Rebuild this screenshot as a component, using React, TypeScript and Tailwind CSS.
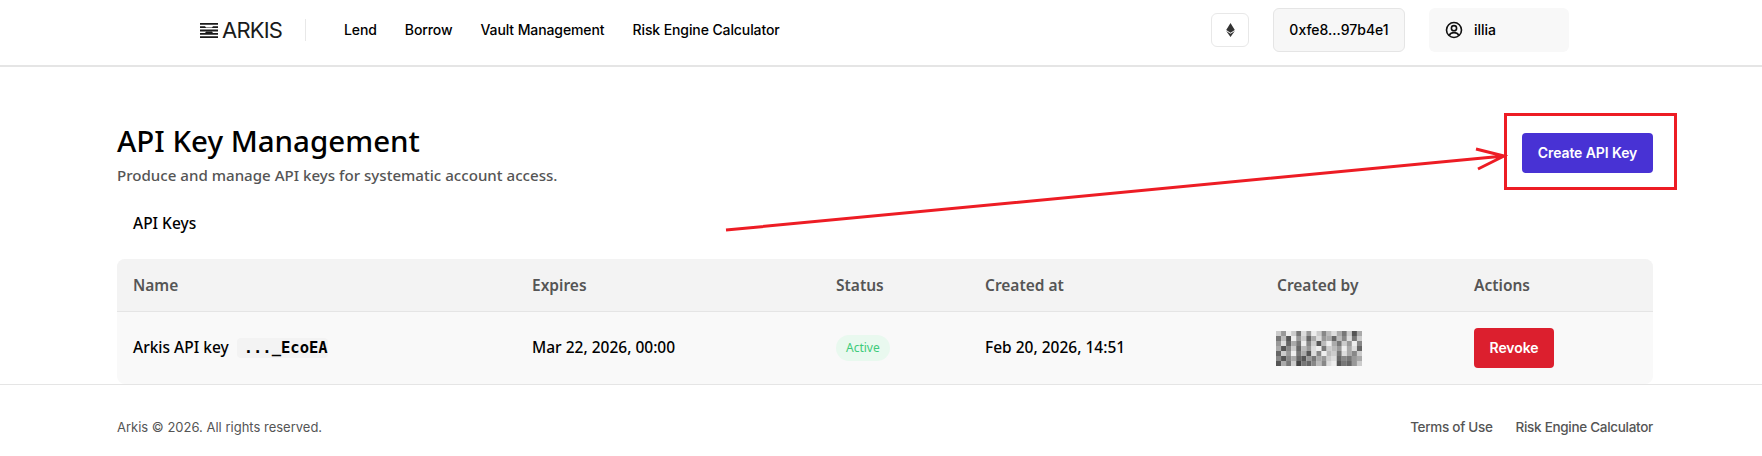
const nav = ['Lend', 'Borrow', 'Vault Management', 'Risk Engine Calculator'];

const tableCols = 'grid-cols-[399px_304px_149px_292px_197px_1fr]';

// gray levels of the pixelated "created by" cell, one hex digit per 5px block
const pixels = [
  'c9ec7d9ec8bda7c5a',
  '7b5e9c6ad9a6b8d7c',
  '9d6a7e8c5bea7c9e8',
  'a58c6b9de7cb9ead6',
  '6c9e7a5d8ebc7da8c',
  '858a6597a9cd6879a',
  '5a7c4768b8de5769c',
];

function Redacted() {
  return (
    <svg width="86" height="35" viewBox="0 0 85 35" preserveAspectRatio="none" className="block">
      {pixels.map((row, y) =>
        row.split('').map((c, x) => (
          <rect key={`${x}-${y}`} x={x * 5} y={y * 5} width="5" height="5" fill={`#${c}${c}${c}`}/>
        ))
      )}
    </svg>
  );
}

export default function App() {
  return (
    <div className="relative h-[456px] w-[1762px] overflow-hidden bg-white font-['Noto_Sans',sans-serif] text-black">
      <header className="flex h-[67px] items-center border-b-2 border-[#e5e5e5] pb-[5px] pl-[200px] pr-[193px]">
        <div className="flex w-[82px] items-center gap-1">
          <svg width="18" height="15" viewBox="0 0 18 15" fill="#1a1a1a" className="shrink-0">
            <path d="M0 0h18v1.800H0zM0 3.300h5l1 1.200h6l1-1.200h5v1.700H0zM0 6.600h18v1.800H0zM0 10h5l1-1.200h6l1 1.200h5v1.700H0zM0 13.200h18V15H0z"/>
          </svg>
          <span className="font-['Inter',sans-serif] text-[22px] font-normal leading-none tracking-[-0.8px] text-[#1a1a1a]">ARKIS</span>
        </div>
        <div className="ml-[23px] h-[22px] w-px bg-[#e8e8e8]"/>
        <nav className="ml-[38px] flex gap-7 font-['Inter',sans-serif] text-sm font-medium tracking-[-0.1px]">
          {nav.map((item) => (
            <a key={item}>{item}</a>
          ))}
        </nav>
        <div className="ml-auto flex items-center gap-6 font-['Inter',sans-serif] text-sm font-medium">
          <button className="flex h-[34px] w-[38px] items-center justify-center rounded-md border border-[#e8e8e8] bg-white">
            <svg width="9" height="14" viewBox="0 0 8 13" fill="#333">
              <path d="M4 0 8 6.500 4 9 0 6.500zM4 10l4-2.600L4 13 0 7.400z"/>
            </svg>
          </button>
          <button className="h-11 w-[132px] rounded-md border border-[#e5e5e5] bg-[#f7f7f7]">0xfe8...97b4e1</button>
          <button className="flex h-11 w-[140px] items-center gap-[11px] rounded-md bg-[#f8f8f8] pl-4">
            <svg width="18" height="18" viewBox="0 0 18 18" fill="none" stroke="#111" strokeWidth="1.600">
              <circle cx="9" cy="9" r="7.500"/>
              <circle cx="9" cy="7.200" r="2.600"/>
              <path d="M4.200 14.400c1-2 2.800-2.800 4.800-2.800s3.800.8 4.800 2.800"/>
            </svg>
            illia
          </button>
        </div>
      </header>

      <main className="pl-[117px] pr-[109px] pt-[54px]">
        <div className="flex items-start justify-between">
          <div>
            <h1 className="mb-1 text-[29.500px] font-medium leading-[40px]">API Key Management</h1>
            <p className="text-[15.100px] font-medium leading-5 text-[#555]">Produce and manage API keys for systematic account access.</p>
          </div>
          <button className="mt-3 h-10 w-[131px] rounded-[4px] bg-[#4832d4] font-['Inter',sans-serif] text-sm font-semibold tracking-[-0.1px] text-white">
            Create API Key
          </button>
        </div>

        <h2 className="mt-7 pl-4 text-[15.500px] font-medium leading-5">API Keys</h2>

        <div className="mt-[26px] overflow-hidden rounded-lg bg-[#f9f9f9] text-[15.500px] font-medium">
          <div className={`grid h-[53px] ${tableCols} items-center border-b border-[#e5e5e5] bg-[#f3f3f3] pl-4 pt-[2px] font-semibold text-[#555]`}>
            <div>Name</div>
            <div>Expires</div>
            <div>Status</div>
            <div>Created at</div>
            <div>Created by</div>
            <div>Actions</div>
          </div>
          <div className={`grid h-[72px] ${tableCols} items-center pl-4`}>
            <div className="flex items-center gap-2">
              Arkis API key
              <code className="rounded bg-[#f3f3f3] pl-[7px] font-['DejaVu_Sans_Mono','Liberation_Mono',monospace] text-[15.500px] font-semibold leading-5">..._EcoEA</code>
            </div>
            <div>Mar 22, 2026, 00:00</div>
            <div>
              <span className="inline-block rounded-full bg-[#e9f9ef] px-[10px] text-xs font-normal leading-[26px] text-[#3ecb7a]">Active</span>
            </div>
            <div>Feb 20, 2026, 14:51</div>
            <div className="-ml-px"><Redacted/></div>
            <div>
              <button className="h-10 w-20 rounded-[4px] bg-[#dc1f2e] font-['Inter',sans-serif] text-sm font-semibold tracking-[-0.1px] text-white">Revoke</button>
            </div>
          </div>
        </div>
      </main>

      <footer className="flex h-[86px] items-center justify-between border-t border-[#e5e5e5] pl-[117px] pr-[109px] font-['Inter',sans-serif] text-[13px] text-[#555]">
        <span>Arkis © 2026. All rights reserved.</span>
        <div className="flex gap-[23px] text-[13.500px] font-medium tracking-[-0.3px]">
          <a>Terms of Use</a>
          <a>Risk Engine Calculator</a>
        </div>
      </footer>

      {/* red annotation drawn over the page */}
      <svg className="pointer-events-none absolute left-0 top-0" width="1762" height="456" fill="none" stroke="#ed1c24" strokeWidth="3">
        <rect x="1505.500" y="114.500" width="170" height="74"/>
        <path d="M726 230 1504 156M1476 149 1504 156 1478 169"/>
      </svg>
    </div>
  );
}
